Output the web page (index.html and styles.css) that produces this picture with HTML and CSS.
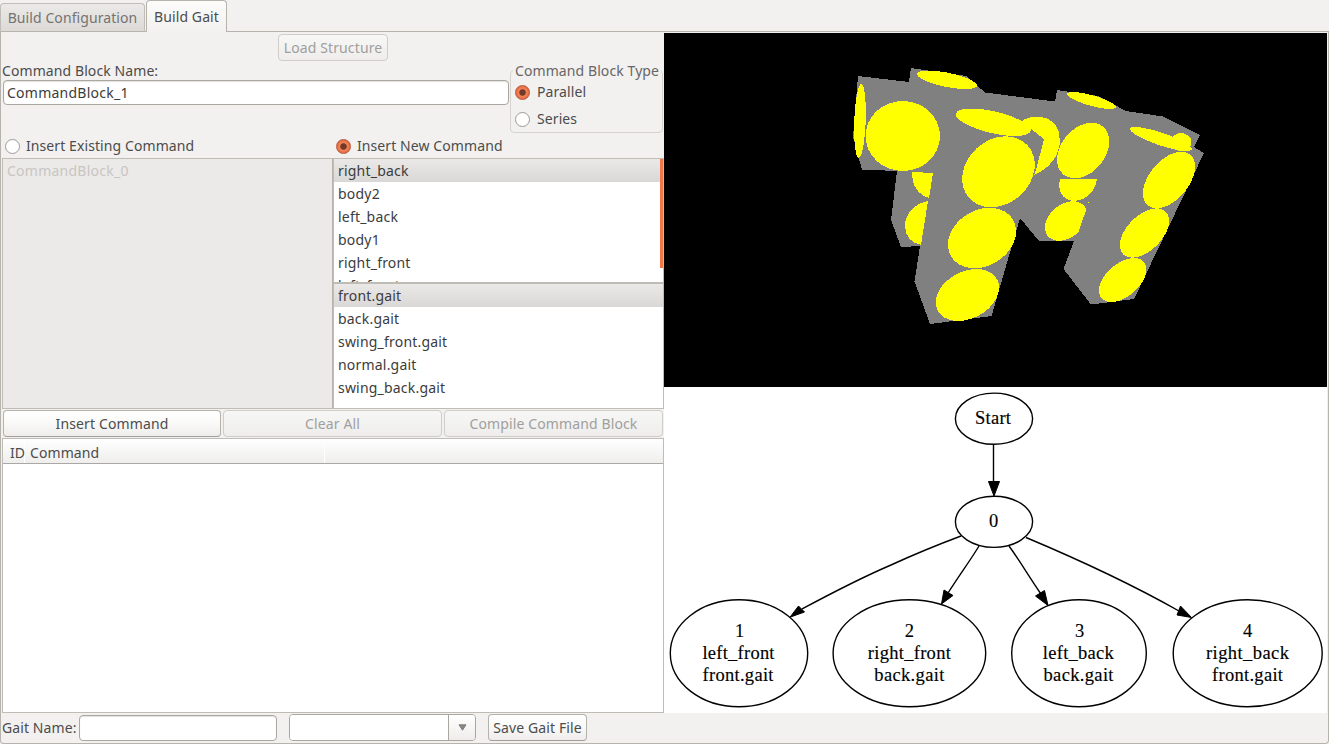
FILE: index.html
```html
<!DOCTYPE html>
<html lang="en">
<head>
<meta charset="utf-8">
<title>Build Gait</title>
<link rel="stylesheet" href="styles.css">
</head>
<body>
<div class="tabs"><div class="tab"><span>Build Configuration</span></div><div class="tab active"><span>Build Gait</span></div></div>
<main class="page">
  <div class="columns">
    <section class="left">
      <div class="load-row"><button class="btn load" disabled>Load Structure</button></div>
      <div class="block-row">
        <div class="name-col">
          <label class="name-label">Command Block Name:</label>
          <div class="field name-field">CommandBlock_1</div>
        </div>
        <fieldset class="type-box">
          <legend>Command Block Type</legend>
          <div class="option"><i class="radio on"></i><span>Parallel</span></div>
          <div class="option"><i class="radio"></i><span>Series</span></div>
        </fieldset>
      </div>
      <div class="mode-row">
        <div class="option"><i class="radio"></i><span>Insert Existing Command</span></div>
        <div class="option"><i class="radio on"></i><span>Insert New Command</span></div>
      </div>
      <div class="lists">
        <div class="list existing"><div class="item">CommandBlock_0</div></div>
        <div class="list-stack">
          <div class="list parts">
            <div class="item selected">right_back</div><div class="item">body2</div><div class="item">left_back</div><div class="item">body1</div><div class="item">right_front</div><div class="item">left_front</div>
            <div class="scrollbar"></div>
          </div>
          <div class="list gaits">
            <div class="item selected">front.gait</div><div class="item">back.gait</div><div class="item">swing_front.gait</div><div class="item">normal.gait</div><div class="item">swing_back.gait</div>
          </div>
        </div>
      </div>
      <div class="button-row">
        <button class="btn">Insert Command</button>
        <button class="btn" disabled>Clear All</button>
        <button class="btn" disabled>Compile Command Block</button>
      </div>
      <div class="table"><div class="thead"><span class="th id">ID</span><span class="th cmd">Command</span><span class="th"></span></div></div>
    </section>
    <section class="right">
      <svg class="scene" width="663" height="354" viewBox="664 33 663 354" shape-rendering="crispEdges">
        <rect x="664" y="33" width="663" height="354" fill="#000"/>
        <path fill="#808080" d="M858 76 909 82 911 68 966 76 985 92.500 1055 101.500 1057 90 1098 96 1126 111 1163 116.500 1200 135 1194 147 1204 153 1134 299 1091 304.500 1063.500 269 1074 241 1039 241 1020 218 991.500 316 930 324 914.500 281.500 920 246 901 247 891 220 897 171 862 169.500 853 137Z"/>
        <g fill="#ff0">
          <ellipse cx="860" cy="121" rx="5.700" ry="37" transform="rotate(2 860 121)"/>
          <ellipse cx="902.800" cy="136" rx="37.200" ry="35"/>
          <ellipse cx="947" cy="79.800" rx="30.600" ry="7.100" transform="rotate(11.400 947 79.800)"/>
          <ellipse cx="993.300" cy="122.300" rx="38.400" ry="10.900" transform="rotate(13.100 993.300 122.300)"/>
          <path d="M1021 121.500C1027 117 1034 116.500 1040 116.700 1053 118 1060 127 1060 142 1059 156 1049 169 1034 175L1036 170 1044 139 1031 129 1030 133 1018 128Z"/>
          <ellipse cx="998.500" cy="171.800" rx="39.300" ry="32.100" transform="rotate(-41.800 998.500 171.800)"/>
          <ellipse cx="982" cy="238" rx="36" ry="27.900" transform="rotate(-31 982 238)"/>
          <ellipse cx="967.400" cy="295" rx="33.600" ry="23.500" transform="rotate(-27.500 967.400 295)"/>
          <path d="M912.500 172 933 173 929 198C919 195 911 186 912.500 172Z"/>
          <path d="M928 201 921 245C911 243 905 236 905 226 905 213 916 203 928 201Z"/>
          <ellipse cx="1083.200" cy="150.500" rx="31.100" ry="22.100" transform="rotate(-50.200 1083.200 150.500)"/>
          <path d="M1060 178.500 1097 179C1096 184 1095 187 1093 190 1088 197 1082 201 1073 201 1063 200 1057 191 1060 178.500Z"/>
          <ellipse cx="1066" cy="221" rx="23.600" ry="16.600" transform="rotate(-39.600 1066 221)"/>
          <path d="M1088 202h1v1h-1z"/>
          <ellipse cx="1091.500" cy="100.500" rx="25.400" ry="5.300" transform="rotate(15.500 1091.500 100.500)"/>
          <ellipse cx="1160.800" cy="139" rx="32.600" ry="6.300" transform="rotate(18.600 1160.800 139)"/>
          <ellipse cx="1181" cy="142" rx="10.500" ry="9"/>
          <ellipse cx="1169" cy="180" rx="33.100" ry="19.600" transform="rotate(-50 1169 180)"/>
          <ellipse cx="1144.500" cy="233" rx="30.100" ry="17.500" transform="rotate(-45 1144.500 233)"/>
          <ellipse cx="1122.700" cy="280" rx="27.900" ry="16.400" transform="rotate(-40.600 1122.700 280)"/>
        </g>
        <path fill="#808080" d="M1086.500 209 1078 233 1090 233 1090 209Z"/>
      </svg>
      <svg class="graph" width="663" height="326" viewBox="664 387 663 326">
        <g fill="none" stroke="#000" stroke-width="1.400">
          <ellipse cx="994" cy="418.700" rx="38.600" ry="25.600"/>
          <ellipse cx="994" cy="521.800" rx="38.600" ry="25.600"/>
          <ellipse cx="739" cy="653.300" rx="68.700" ry="53.500"/>
          <ellipse cx="909.400" cy="653.300" rx="76.300" ry="53.500"/>
          <ellipse cx="1079" cy="653.300" rx="67.300" ry="53.500"/>
          <ellipse cx="1247.700" cy="653.300" rx="74.500" ry="53.500"/>
          <path d="M993.500 444V483M961 536C937 545 915 554 891 565 856 580 830 594 802 609M979 546C970 561 960 574 948 593M1009 546C1020 561 1028 575 1041 594M1026 537.500C1082 561 1133 585 1179 611"/>
        </g>
        <path stroke="#000" d="M988.500 481.500H999.500L994 496ZM790 617.200 798.500 606 804.500 612ZM941.500 604 944 590 953 595.500ZM1048 605.500 1035.500 596 1044.500 590.500ZM1191.500 617.500 1177 615 1180.500 606Z"/>
        <g class="node-text">
          <text x="993" y="424" textLength="36">Start</text>
          <text x="993.500" y="527" textLength="11">0</text>
          <text x="739.500" y="637">1</text><text x="738.500" y="659" textLength="72">left_front</text><text x="738" y="680.500" textLength="71">front.gait</text>
          <text x="909.300" y="637">2</text><text x="909.300" y="659" textLength="83">right_front</text><text x="909.300" y="680.500" textLength="70">back.gait</text>
          <text x="1079.500" y="637">3</text><text x="1078.300" y="659" textLength="71">left_back</text><text x="1078.500" y="680.500" textLength="70">back.gait</text>
          <text x="1247.500" y="637">4</text><text x="1247.500" y="659" textLength="83">right_back</text><text x="1247.500" y="680.500" textLength="71">front.gait</text>
        </g>
      </svg>
    </section>
  </div>
  <footer class="footer">
    <label class="gait-label">Gait Name:</label>
    <div class="field gait-field"></div>
    <div class="combo"><div class="combo-value"></div><div class="combo-arrow"><svg width="9" height="7" viewBox="0 0 9 7"><path d="M1 .8H8L4.500 6.200Z" fill="#8b8985" stroke="#6d6b67" stroke-width=".8"/></svg></div></div>
    <button class="btn save">Save Gait File</button>
  </footer>
</main>
</body>
</html>
```
FILE: styles.css
```css
* { box-sizing: border-box; }
body {
  margin: 0; width: 1329px; height: 744px; overflow: hidden;
  display: flex; flex-direction: column;
  background: #f2f1f0; color: #4c4c4c;
  font: 14px/20px "Noto Sans", "Open Sans", sans-serif;
  letter-spacing: .09px;
}
.tabs { display: flex; align-items: flex-end; height: 32px; gap: 1px; background: linear-gradient(#b6b2ac, #b6b2ac) 0 31px / 100% 1px no-repeat; }
.tab {
  width: 145px; height: 29px; padding-top: 4px; text-align: center; white-space: nowrap;
  border: 1px solid #c0bcb6; border-bottom-color: #b6b2ac; border-radius: 4px 4px 0 0;
  background: linear-gradient(#ebeae8, #dcdad7); color: #757371;
}
.tab.active { width: 81px; height: 32px; background: linear-gradient(#fcfcfb, #f2f1f0); border-color: #b6b2ac; border-bottom: 0; color: #4c4c4c; padding-top: 6px; }
.page { height: 712px; padding: 1px 1px 0; border: 1px solid #b6b2ac; border-top: 0; border-radius: 0 0 4px 4px; }
.columns { display: flex; height: 680px; }
.left { width: 662px; display: flex; flex-direction: column; }
.right { width: 663px; display: flex; flex-direction: column; }
.right svg { display: block; }
.graph { background: #fff; }
.node-text { font: 18.500px "Liberation Serif", serif; letter-spacing: 0; text-anchor: middle; fill: #000; stroke: #000; stroke-width: .15px; }
.load-row { height: 28px; padding-top: 1px; display: flex; justify-content: center; }
.btn {
  height: 27px; padding: 0; border: 1px solid #b5b1ab; border-bottom-color: #a29e98; border-radius: 4px;
  background: linear-gradient(#fff, #f9f9f8 50%, #eeedeb); color: #4c4c4c; font: inherit; letter-spacing: .12px; line-height: 25px; text-align: center; white-space: nowrap;
}
.btn:disabled { border-color: #d0cdc9; background: linear-gradient(#f7f7f6, #eeedec); color: #a09f9e; }
.load { width: 110px; }
.block-row { display: flex; height: 73px; }
.name-col { width: 508px; display: flex; flex-direction: column; }
.name-label { height: 19px; line-height: 20px; }
.field { border: 1px solid #aaa6a0; border-radius: 4px; background: #fff; box-shadow: inset 0 1px 1px #e4e2df; color: #3c3c3c; }
.name-field { width: 506px; height: 25px; margin-left: 1px; padding-left: 3px; line-height: 23px; letter-spacing: .25px; }
.type-box { position: relative; width: 153px; height: 63px; margin: 9px 0 0; padding: 11px 0 0 4px; border: 1px solid #d7d4d0; border-radius: 4px; display: flex; flex-direction: column; gap: 7px; min-width: 0; }
.type-box .option { gap: 7px; }
.type-box legend { position: absolute; left: 2px; top: -10px; padding: 0 2px; background: #f2f1f0; color: #686664; white-space: nowrap; }
.option { display: flex; align-items: center; gap: 6px; height: 20px; white-space: nowrap; }
.radio { width: 15px; height: 15px; flex: none; border: 1px solid #9d9a96; border-radius: 50%; background: #fff; }
.radio.on { border-color: #b9573a; background: radial-gradient(circle, #733b27 0 2.800px, #f0835a 3.700px, #ee7a50 5px, #d9663f 7px); }
.mode-row { display: grid; grid-template-columns: 331px 331px; height: 24px; padding: 2px 0 0 3px; }
.lists { display: flex; height: 251px; }
.list { position: relative; overflow: hidden; background: #fff; border: 1px solid #bfbcb5; color: #3c3c3c; }
.existing { width: 331px; background: #ebeae9; color: #c9c5c1; border-right-color: #b8b4ad; }
.existing .item { letter-spacing: .25px; }
.list-stack { width: 331px; display: flex; flex-direction: column; }
.parts { height: 125px; }
.gaits { height: 126px; }
.item { height: 23px; padding-left: 4px; line-height: 23px; white-space: nowrap; letter-spacing: .2px; }
.selected { background: linear-gradient(#eae9e8, #dad8d6); }
.scrollbar { position: absolute; right: 0; top: 0; width: 3px; height: 109px; background: #f07746; }
.button-row { display: flex; gap: 2px; height: 29px; padding: 1px 1px 0; }
.button-row .btn { width: 219px; }
.button-row .btn:first-child { width: 218px; }
.table { height: 275px; border: 1px solid #bfbcb5; background: #fff; }
.thead { display: flex; height: 25px; border-bottom: 1px solid #aaa8a4; background: linear-gradient(#fff, #efeeed); }
.th { padding-left: 5px; line-height: 28px; border-right: 1px solid #fff; }
.th:last-child { border: 0; }
.th.id { padding-left: 7px; width: 22px; }
.th.cmd { width: 300px; }
.footer { display: flex; height: 29px; padding-top: 1px; }
.gait-label { width: 77px; line-height: 28px; white-space: nowrap; }
.gait-field { width: 198px; height: 26px; margin-top: 1px; }
.combo { display: flex; width: 187px; height: 27px; margin-left: 12px; border: 1px solid #aaa6a0; border-radius: 4px; overflow: hidden; }
.combo-value { width: 159px; background: #fff; border-right: 1px solid #aaa6a0; }
.combo-arrow { flex: 1; display: flex; align-items: center; justify-content: center; background: linear-gradient(#fff, #eeedeb); }
.save { width: 99px; margin-left: 12px; }
```
